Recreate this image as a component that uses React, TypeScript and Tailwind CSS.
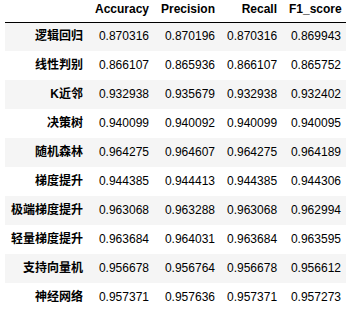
const columns = ["Accuracy", "Precision", "Recall", "F1_score"];

// Model scores, one row per classifier
const rows: [string, string[]][] = [
  ["逻辑回归", ["0.870316", "0.870196", "0.870316", "0.869943"]],
  ["线性判别", ["0.866107", "0.865936", "0.866107", "0.865752"]],
  ["K近邻", ["0.932938", "0.935679", "0.932938", "0.932402"]],
  ["决策树", ["0.940099", "0.940092", "0.940099", "0.940095"]],
  ["随机森林", ["0.964275", "0.964607", "0.964275", "0.964189"]],
  ["梯度提升", ["0.944385", "0.944413", "0.944385", "0.944306"]],
  ["极端梯度提升", ["0.963068", "0.963288", "0.963068", "0.962994"]],
  ["轻量梯度提升", ["0.963684", "0.964031", "0.963684", "0.963595"]],
  ["支持向量机", ["0.956678", "0.956764", "0.956678", "0.956612"]],
  ["神经网络", ["0.957371", "0.957636", "0.957371", "0.957273"]],
];

const widths = ["w-[66px]", "w-[66px]", "w-[62px]", "w-[64px]"];

export default function App() {
  return (
    <div
      className="w-[346px] h-[312px] overflow-hidden bg-white pl-[5px] text-[12px] text-black"
      style={{ fontFamily: '"Liberation Sans", Arial, "Noto Sans CJK SC", sans-serif' }}
    >
      <table className="border-collapse table-fixed w-[342px]">
        <thead>
          <tr className="border-b border-black">
            <th className="w-[84px] h-[22px]"></th>
            {columns.map((c, i) => (
              <th
                key={c}
                className={`${widths[i]} h-[22px] px-[6px] pb-[6px] align-bottom text-right font-bold leading-[14px] whitespace-nowrap`}
              >
                {c}
              </th>
            ))}
          </tr>
        </thead>
        <tbody>
          {rows.map(([name, vals], r) => (
            <tr key={name} className={r % 2 === 0 ? "bg-[#f5f5f5]" : "bg-white"}>
              <th className="h-[29px] px-[6px] text-right font-bold leading-[17px] whitespace-nowrap">
                {name}
              </th>
              {vals.map((v, i) => (
                <td key={i} className="h-[29px] px-[6px] text-right leading-[17px] whitespace-nowrap">
                  {v}
                </td>
              ))}
            </tr>
          ))}
        </tbody>
      </table>
    </div>
  );
}
